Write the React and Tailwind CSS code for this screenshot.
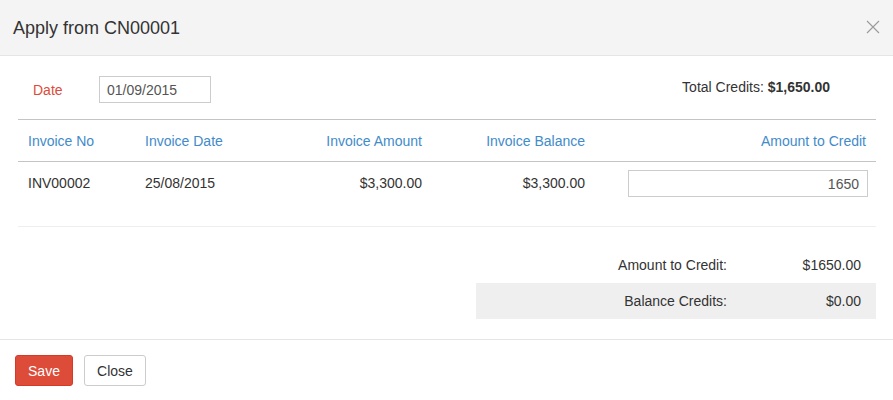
import React from "react";

export default function App() {
  const font = { fontFamily: '"Liberation Sans", Arial, sans-serif' };
  return (
    <div className="w-[893px] h-[400px] bg-white text-[#333] text-[14px] leading-[20px] overflow-hidden" style={font}>
      {/* Header */}
      <div className="h-[56px] bg-[#f4f4f4] border-b border-[#e5e5e5] flex items-center justify-between pl-[13px] pr-[13px]">
        <div className="text-[18px] leading-[24px] text-[#333] pt-[1px]">Apply from CN00001</div>
        <svg width="14" height="14" viewBox="0 0 14 14" className="mt-[-1px]">
          <path d="M1 1 L13 13 M13 1 L1 13" stroke="#9a9a9a" strokeWidth="1.1" fill="none" />
        </svg>
      </div>

      {/* Body */}
      <div className="pl-[18px] pr-[17px]">
        <div className="h-[63px] flex items-start justify-between pt-[20px]">
          <div className="flex items-center">
            <div className="w-[81px] pl-[15px] text-[#dd4b39] pt-[1px]">Date</div>
            <div className="w-[112px] h-[27px] border border-[#ccc] px-[7px] flex items-center text-[#555]">01/09/2015</div>
          </div>
          <div className="pr-[46px] pt-[1px]">
            Total Credits: <span className="font-bold">$1,650.00</span>
          </div>
        </div>

        {/* Table */}
        <div className="border-t border-[#c4c4c4]">
          <div className="grid grid-cols-[117px_127px_170px_163px_281px] h-[42px] items-center border-b border-[#c4c4c4] text-[#428bca]">
            <div className="pl-[10px]">Invoice No</div>
            <div className="pl-[10px]">Invoice Date</div>
            <div className="pr-[10px] text-right">Invoice Amount</div>
            <div className="pr-[10px] text-right">Invoice Balance</div>
            <div className="pr-[10px] text-right">Amount to Credit</div>
          </div>
          <div className="grid grid-cols-[117px_127px_170px_163px_281px] h-[65px] items-start border-b border-[#eeeeee]">
            <div className="pl-[10px] pt-[11px]">INV00002</div>
            <div className="pl-[10px] pt-[11px]">25/08/2015</div>
            <div className="pr-[10px] pt-[11px] text-right">$3,300.00</div>
            <div className="pr-[10px] pt-[11px] text-right">$3,300.00</div>
            <div className="flex justify-end pr-[8px] pt-[8px]">
              <div className="w-[240px] h-[27px] border border-[#ccc] flex items-center justify-end pr-[8px] text-[#555]">1650</div>
            </div>
          </div>
        </div>

        {/* Summary */}
        <div className="flex justify-end pt-[20px] pb-[20px]">
          <div className="w-[400px]">
            <div className="grid grid-cols-[261px_139px] h-[36px] items-center">
              <div className="text-right pr-[10px]">Amount to Credit:</div>
              <div className="text-right pr-[15px]">$1650.00</div>
            </div>
            <div className="grid grid-cols-[261px_139px] h-[36px] items-center bg-[#efefef]">
              <div className="text-right pr-[10px]">Balance Credits:</div>
              <div className="text-right pr-[15px]">$0.00</div>
            </div>
          </div>
        </div>
      </div>

      {/* Footer */}
      <div className="border-t border-[#e5e5e5] pt-[15px] pl-[15px] flex gap-[11px]">
        <button className="w-[58px] h-[31px] rounded-[3px] bg-[#dd4b39] border border-[#d73925] text-white text-[14px]" style={font}>Save</button>
        <button className="w-[62px] h-[31px] rounded-[3px] bg-white border border-[#ccc] text-[#333] text-[14px]" style={font}>Close</button>
      </div>
    </div>
  );
}
